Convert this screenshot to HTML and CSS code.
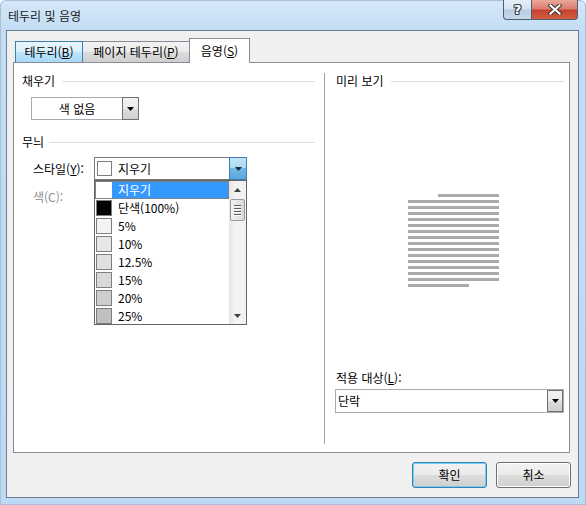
FILE: index.html
```html
<!DOCTYPE html>
<html lang="ko">
<head>
<meta charset="utf-8">
<title>테두리 및 음영</title>
<link rel="stylesheet" href="styles.css">
</head>
<body>
<div class="window">
  <div class="titlebar">
    <div class="title">테두리 및 음영</div>
    <div class="caption-btns">
      <div class="cap-btn cap-help">?</div>
      <div class="cap-btn cap-close">
        <svg width="14" height="11" viewBox="0 0 14 11">
          <path d="M2.5 1.5 L11.5 9.5 M11.5 1.5 L2.5 9.5" stroke="#3b3030" stroke-width="4.2" stroke-linecap="square" fill="none"/>
          <path d="M2.5 1.5 L11.5 9.5 M11.5 1.5 L2.5 9.5" stroke="#ffffff" stroke-width="2.2" stroke-linecap="square" fill="none"/>
        </svg>
      </div>
    </div>
  </div>
  <div class="client">
    <div class="tabs">
      <div class="tab tab-hover tab-w1">테두리(<u>B</u>)</div>
      <div class="tab tab-w2">페이지 테두리(<u>P</u>)</div>
      <div class="tab tab-active tab-w3">음영(<u>S</u>)</div>
    </div>
    <div class="panel">
      <div class="col-left">
        <div class="group-head"><span>채우기</span><i class="rule"></i></div>
        <div class="combo combo-fill">
          <span class="combo-text combo-center">색 없음</span>
          <span class="combo-btn"><svg width="7" height="4" viewBox="0 0 7 4"><path d="M0 0H7L3.5 4Z" fill="#000"/></svg></span>
        </div>
        <div class="group-head group-2"><span>무늬</span><i class="rule rule-short"></i></div>
        <div class="field-row">
          <span class="label">스타일(<u>Y</u>):</span>
          <div class="combo combo-style">
            <span class="swatch swatch-combo"></span>
            <span class="combo-text combo-style-text">지우기</span>
            <span class="combo-btn combo-btn-open"><svg width="7" height="4" viewBox="0 0 7 4"><path d="M0 0H7L3.5 4Z" fill="#1b2a3a"/></svg></span>
            <div class="dropdown">
              <div class="list">
                <div class="item item-selected"><span class="swatch sw-white"></span><span>지우기</span></div>
                <div class="item"><span class="swatch sw-black"></span><span>단색(100%)</span></div>
                <div class="item"><span class="swatch sw-5"></span><span>5%</span></div>
                <div class="item"><span class="swatch sw-10"></span><span>10%</span></div>
                <div class="item"><span class="swatch sw-125"></span><span>12.5%</span></div>
                <div class="item"><span class="swatch sw-15"></span><span>15%</span></div>
                <div class="item"><span class="swatch sw-20"></span><span>20%</span></div>
                <div class="item"><span class="swatch sw-25"></span><span>25%</span></div>
              </div>
              <div class="scrollbar">
                <div class="sb-arrow"><svg width="7" height="4" viewBox="0 0 7 4"><path d="M3.5 0L7 4H0Z" fill="#404040"/></svg></div>
                <div class="sb-thumb"><i></i><i></i><i></i><i></i></div>
                <div class="sb-track"></div>
                <div class="sb-arrow"><svg width="7" height="4" viewBox="0 0 7 4"><path d="M0 0H7L3.5 4Z" fill="#404040"/></svg></div>
              </div>
            </div>
          </div>
        </div>
        <div class="field-row field-color">
          <span class="label label-disabled">색(C):</span>
        </div>
      </div>
      <div class="col-right">
        <div class="group-head"><span>미리 보기</span><i class="rule"></i></div>
        <div class="preview">
          <div class="pline pline-first"></div>
          <div class="pline"></div>
          <div class="pline"></div>
          <div class="pline"></div>
          <div class="pline"></div>
          <div class="pline"></div>
          <div class="pline"></div>
          <div class="pline"></div>
          <div class="pline"></div>
          <div class="pline"></div>
          <div class="pline"></div>
          <div class="pline"></div>
          <div class="pline"></div>
          <div class="pline"></div>
          <div class="pline"></div>
          <div class="pline pline-last"></div>
        </div>
        <div class="apply-label">적용 대상(<u>L</u>):</div>
        <div class="combo combo-apply">
          <span class="combo-text">단락</span>
          <span class="combo-btn"><svg width="7" height="4" viewBox="0 0 7 4"><path d="M0 0H7L3.5 4Z" fill="#000"/></svg></span>
        </div>
      </div>
    </div>
    <div class="buttons">
      <button class="btn btn-default">확인</button>
      <button class="btn">취소</button>
    </div>
  </div>
</div>
</body>
</html>
```

FILE: styles.css
```css
* { box-sizing: border-box; }

html, body {
  margin: 0;
  padding: 0;
  background: #ffffff;
}

body {
  font-family: "Noto Sans CJK KR", "Noto Sans", sans-serif;
  font-size: 12px;
  line-height: 16px;
  color: #000;
}

u { text-decoration: underline; text-underline-offset: 1px; }

.window {
  width: 586px;
  height: 505px;
  display: flex;
  flex-direction: column;
  background: linear-gradient(180deg, #d6e8f8 0px, #c4ddf4 28px, #bdd9f3 100%);
  border-radius: 6px 6px 0 0;
  box-shadow: inset 0 0 0 1px #a9bfd6;
}

/* title bar */
.titlebar {
  height: 30px;
  flex: none;
  display: flex;
  justify-content: space-between;
  align-items: flex-start;
}

.title {
  padding: 8px 0 0 8px;
  color: #1a1a1a;
}

.caption-btns {
  display: flex;
  margin-right: 8px;
}

.cap-btn {
  height: 20px;
  border: 1px solid #4e5f73;
  border-top: none;
  display: flex;
  align-items: center;
  justify-content: center;
}

.cap-help {
  width: 28px;
  border-right: none;
  border-radius: 0 0 0 4px;
  background: linear-gradient(180deg, #e7eff8 0%, #d3e1ef 48%, #b9cde2 52%, #c8d8ea 100%);
  color: #fff;
  font-family: "DejaVu Sans", sans-serif;
  font-weight: bold;
  font-size: 13px;
  line-height: 14px;
  text-shadow: 1px 0 #3a4656, -1px 0 #3a4656, 0 1px #3a4656, 0 -1px #3a4656, 1px 1px #3a4656, -1px -1px #3a4656, 1px -1px #3a4656, -1px 1px #3a4656;
}

.cap-close {
  width: 47px;
  border-radius: 0 0 4px 0;
  background: linear-gradient(180deg, #e9a99b 0%, #dd7d6e 45%, #c84132 55%, #d0603f 100%);
}

/* client */
.client {
  flex: 1;
  margin: 0 7px 7px 6px;
  border: 1px solid #6c7e92;
  background: #f0f0f0;
  padding: 7px 7px 9px 6px;
  display: flex;
  flex-direction: column;
}

.tabs {
  height: 25px;
  flex: none;
  display: flex;
  align-items: flex-end;
  padding-left: 2px;
  margin-bottom: -1px;
  position: relative;
  z-index: 1;
}

.tab {
  height: 21px;
  margin-bottom: 1px;
  border: 1px solid #898c95;
  border-bottom: none;
  background: linear-gradient(180deg, #f2f2f2 0%, #ebebeb 50%, #dddddd 50%, #cfcfcf 100%);
  text-align: center;
  line-height: 19px;
  white-space: nowrap;
}

.tab-w1 { width: 68px; }
.tab-w2 { width: 108px; margin-left: -1px; }
.tab-w3 { width: 61px; margin-left: -1px; }

.tab-hover {
  border-color: #3c7fb1;
  background: linear-gradient(180deg, #eaf6fd 0%, #d9f0fc 50%, #bee6fd 50%, #a7d9f5 100%);
  position: relative;
  z-index: 1;
}

.tab-active {
  height: 25px;
  margin-bottom: 0;
  background: #ffffff;
  line-height: 24px;
}

.panel {
  flex: 1;
  display: flex;
  border: 1px solid #898c95;
  background: #ffffff;
  padding: 10px 5px 8px 0;
  margin-right: 1px;
}

.col-left {
  width: 310px;
  flex: none;
  padding: 0 9px 0 8px;
}

.col-right {
  flex: 1;
  border-left: 1px solid #a0a0a0;
  padding: 0 0 31px 11px;
  display: flex;
  flex-direction: column;
}

.group-head {
  display: flex;
  align-items: center;
  height: 16px;
}

.rule {
  flex: 1;
  height: 1px;
  background: #d5dfe5;
  margin-left: 7px;
}

.rule-short { margin-left: 5px; }

.group-2 { margin-top: 14px; }

/* combo boxes */
.combo {
  display: flex;
  align-items: stretch;
  background: #fff;
  border: 1px solid #a5acb5;
  position: relative;
}

.combo-text {
  flex: 1;
  line-height: 21px;
  white-space: nowrap;
}

.combo-center { text-align: center; }

.combo-btn {
  width: 17px;
  flex: none;
  margin: -1px -1px -1px 0;
  border: 1px solid #707070;
  background: linear-gradient(180deg, #f2f2f2 0%, #ebebeb 50%, #dddddd 50%, #cfcfcf 100%);
  display: flex;
  align-items: center;
  justify-content: center;
}

.combo-fill {
  width: 108px;
  height: 23px;
  margin: 8px 0 0 9px;
}

.field-row {
  display: flex;
  align-items: center;
  margin-top: 7px;
  padding-left: 11px;
}

.label {
  width: 61px;
  flex: none;
  white-space: nowrap;
}

.label-disabled { color: #8d8d8d; }

.field-color {
  margin-top: 9px;
}

.combo-style {
  width: 153px;
  height: 23px;
  border-color: #7a7a7a;
  align-items: center;
}

.swatch {
  display: block;
  flex: none;
  width: 16px;
  height: 16px;
  border: 1px solid #7e7e7e;
  background: #fff;
}

.swatch-combo {
  width: 15px;
  height: 15px;
  margin: 0 6px 0 2px;
}

.combo-style .combo-btn-open {
  align-self: stretch;
  width: 18px;
  border-color: #3c7fb1;
  background: linear-gradient(180deg, #c2e4f6 0%, #a9d9f2 50%, #6fb8e6 50%, #5aa8e0 100%);
}

/* dropdown list */
.dropdown {
  position: absolute;
  top: 100%;
  left: -1px;
  width: 153px;
  height: 145px;
  margin-top: 1px;
  border: 1px solid #646464;
  background: #fff;
  display: flex;
  z-index: 5;
}

.list {
  flex: 1;
}

.item {
  height: 18px;
  display: flex;
  align-items: center;
  padding-left: 1px;
  white-space: nowrap;
}

.item .swatch {
  margin-right: 6px;
}

.item-selected {
  background: #3399ff;
  color: #fff;
  outline: 1px dotted #c96a16;
  outline-offset: -1px;
}

.item-selected .swatch { border-color: #ffffff; }

.sw-white { background: #ffffff; }
.sw-black { background: #000000; }
.sw-5 { background: #f3f3f3; }
.sw-10 { background: #e6e6e6; }
.sw-125 { background: #e0e0e0; }
.sw-15 { background: #d9d9d9; }
.sw-20 { background: #cdcdcd; }
.sw-25 { background: #c0c0c0; }

.scrollbar {
  width: 17px;
  flex: none;
  display: flex;
  flex-direction: column;
  background: linear-gradient(90deg, #e6e6e6, #f4f4f4 40%, #f0f0f0);
}

.sb-arrow {
  height: 17px;
  display: flex;
  align-items: center;
  justify-content: center;
}

.sb-thumb {
  height: 22px;
  margin: 1px 1px 0;
  border: 1px solid #9a9a9a;
  border-radius: 2px;
  background: linear-gradient(90deg, #f3f3f3, #e6e6e6 50%, #d8d8d8);
  display: flex;
  flex-direction: column;
  align-items: center;
  justify-content: center;
  gap: 1px;
}

.sb-thumb i {
  display: block;
  width: 7px;
  height: 1px;
  background: #5a5a5a;
  box-shadow: 0 1px 0 #ffffff;
  margin-bottom: 1px;
}

.sb-track { flex: 1; }

/* preview */
.preview {
  flex: 1;
  padding: 105px 0 0 72px;
}

.pline {
  width: 91px;
  height: 3px;
  margin-bottom: 3px;
  background: #aaaaaa;
}

.pline-first {
  width: 61px;
  margin-left: 30px;
}

.pline-last { width: 61px; }

.apply-label {
  height: 16px;
  white-space: nowrap;
}

.combo-apply {
  height: 24px;
  margin: 3px 0 0 -1px;
  border-color: #a5acb5;
}

.combo-apply .combo-text {
  padding-left: 2px;
  line-height: 22px;
}

.combo-apply .combo-btn {
  margin: 0;
  width: 16px;
}

/* buttons */
.buttons {
  flex: none;
  display: flex;
  justify-content: flex-end;
  gap: 9px;
  margin-top: 9px;
}

.btn {
  width: 75px;
  height: 26px;
  font: inherit;
  color: #000;
  border: 1px solid #707070;
  border-radius: 3px;
  background: linear-gradient(180deg, #f2f2f2 0%, #ebebeb 50%, #dddddd 50%, #cfcfcf 100%);
  box-shadow: inset 0 0 0 1px #fcfcfc;
  padding: 0;
}

.btn-default {
  border-color: #3c7fb1;
  box-shadow: inset 0 0 0 1px #6ed0f8;
}
```
